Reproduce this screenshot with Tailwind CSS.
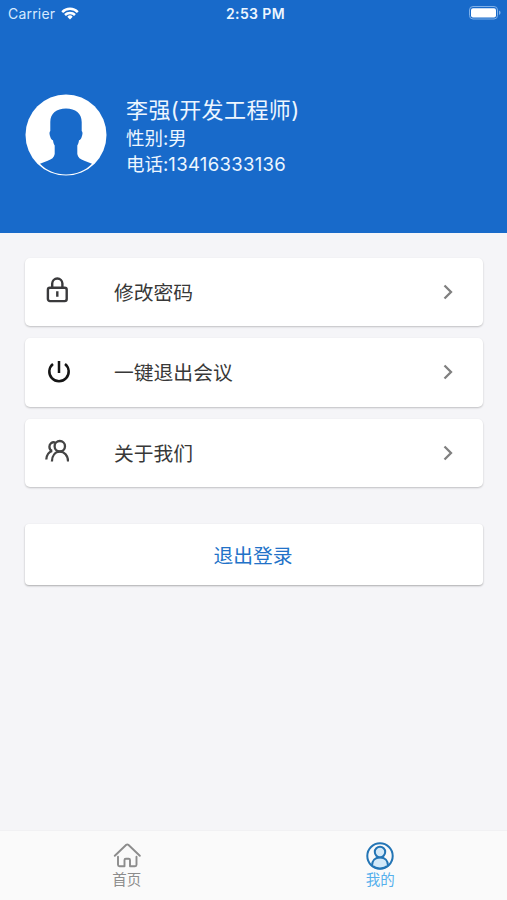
<!DOCTYPE html>
<html lang="zh-CN">
<head>
    <meta charset="UTF-8" />
    <meta name="viewport" content="width=device-width, initial-scale=1" />
    <title>我的</title>
    <script src="https://cdn.jsdelivr.net/npm/@tailwindcss/browser@4"></script>
</head>
<body class="bg-[#f5f5f8] h-screen flex flex-col overflow-hidden font-['Inter','Noto_Sans_CJK_SC',sans-serif]">
    <!-- Profile header -->
    <header class="bg-[#186aca] text-[#edf6ff] h-[233px] shrink-0">
        <div class="grid grid-cols-3 items-center h-7 pl-2 pr-1.5 text-[14px]">
            <div class="flex items-center gap-1.5 -mt-0.5 text-[#d5e9ff]">
                <span class="tracking-[0.2px]">Carrier</span>
                <svg class="w-[18px] h-[13px] text-white" viewBox="0 0 18 13" fill="none" stroke="currentColor" stroke-width="2.5">
                    <path d="M1.2 5.1a11 11 0 0 1 15.6 0" />
                    <path d="M4 8a7.1 7.1 0 0 1 10 0" />
                    <path d="M9 12.4 6.3 9.7a3.8 3.8 0 0 1 5.4 0z" fill="currentColor" stroke="none" />
                </svg>
            </div>
            <span class="text-center text-[14px] font-semibold tracking-[0.4px] -mt-0.5 pl-0.5">2:53 PM</span>
            <svg class="justify-self-end w-8 h-[14px] -mt-0.5" viewBox="0 0 32 14">
                <rect x="0.5" y="0.5" width="28" height="12.5" rx="3.5" fill="none" stroke="#7fb0e8" />
                <rect x="2" y="2.2" width="25" height="9.3" rx="2" fill="#fff" />
                <path d="M30 4.5q1.6.6 1.6 2.2T30 9z" fill="#7fb0e8" />
            </svg>
        </div>
        <div class="flex items-center pl-[25px] pt-[66px]">
            <svg class="w-[82px] h-[82px] -mt-0.5" viewBox="0 0 82 82">
                <circle cx="41" cy="41" r="40.5" fill="#fff" />
                <path d="M41 14.500c-9.500 0-15.700 5-15.700 13.500V37c-1.200.8-1 3.500.2 6.500.5 1.500 1.300 2.500 2.500 2.800.3 2 .6 3.700 1.700 5.200v8.500c-.5 3.500-3 5.300-7 6.700L15 69.800C22 77 31 80.500 41 80.500S60 77 67 69.800l-7.700-3.100c-4-1.400-6.500-3.200-7-6.700v-8.500c1.100-1.500 1.400-3.200 1.700-5.200 1.200-.3 2-1.300 2.500-2.800 1.200-3 1.400-5.700.2-6.500v-9c0-8.500-6.200-13.500-15.700-13.500z" fill="#186aca" />
            </svg>
            <div class="pl-[19px] pt-0.5">
                <h1 class="text-[22px] leading-[29px] tracking-[0.4px]">李强(开发工程师)</h1>
                <p class="text-[18.500px] leading-[26px]">性别:男</p>
                <p class="text-[18.500px] leading-[26px]">电话:<span class="tracking-[0.32px]">13416333136</span></p>
            </div>
        </div>
    </header>

    <!-- Menu -->
    <main class="flex-1 px-[25px] pt-[24.500px] text-[19.800px] text-[#383838]">
        <div class="flex flex-col gap-3 w-[458px]">
            <a href="#" class="flex items-center h-[68.500px] bg-white rounded-[5px] shadow-[0_1px_2px_rgba(0,0,0,0.22)] pl-5 pr-[29px]">
                <svg class="w-6 h-7 shrink-0 -mt-1" viewBox="0 0 24 28" fill="none" stroke="#3a3a3c" stroke-width="2.400">
                    <rect x="2.900" y="11.700" width="18.800" height="13.400" rx="2" />
                    <path d="M7.200 11.500V7.600a5.100 5.100 0 0 1 10.200 0v3.900M12.300 15.300v5.500" />
                </svg>
                <span class="flex-1 pl-[45px] pt-[4px]">修改密码</span>
                <svg class="w-3 h-4" viewBox="0 0 12 16" fill="none" stroke="#808080" stroke-width="2.300"><path d="m2.500 1.500 6.500 6.500-6.500 6.500" /></svg>
            </a>
            <a href="#" class="flex items-center h-[68.500px] bg-white rounded-[5px] shadow-[0_1px_2px_rgba(0,0,0,0.22)] pl-5 pr-[29px]">
                <svg class="w-6 h-6 shrink-0 ml-0.5 -mr-0.5" viewBox="0 0 24 24" fill="none" stroke="#151515" stroke-width="2.500">
                    <path d="M12 1v12M6 3.900a9.700 9.700 0 1 0 12 0" />
                </svg>
                <span class="flex-1 pl-[45px] pt-[4px]">一键退出会议</span>
                <svg class="w-3 h-4" viewBox="0 0 12 16" fill="none" stroke="#808080" stroke-width="2.300"><path d="m2.500 1.500 6.500 6.500-6.500 6.500" /></svg>
            </a>
            <a href="#" class="flex items-center h-[68.500px] bg-white rounded-[5px] shadow-[0_1px_2px_rgba(0,0,0,0.22)] pl-5 pr-[29px]">
                <svg class="w-6 h-6 shrink-0 -mt-1" viewBox="0 0 24 24" fill="none" stroke="#444" stroke-width="2.300">
                    <circle cx="14.800" cy="7.200" r="5.200" />
                    <path d="M6.900 22.500c.2-6 3.300-9.800 7.900-9.800s8.100 3.800 8.300 9.800" />
                    <path d="M10.300 3.500C7 2.500 4.400 4.600 4.400 7.700c0 2 1 3.500 2.700 4.300M7.200 12c-3.500 1-5.600 4-5.900 8.500" />
                </svg>
                <span class="flex-1 pl-[45px] pt-[4px]">关于我们</span>
                <svg class="w-3 h-4" viewBox="0 0 12 16" fill="none" stroke="#808080" stroke-width="2.300"><path d="m2.500 1.500 6.500 6.500-6.500 6.500" /></svg>
            </a>
        </div>
        <button type="button" class="mt-[37px] w-[458px] h-[61px] pt-1 pr-0.5 bg-white rounded-[4px] shadow-[0_1px_2px_rgba(0,0,0,0.3)] text-[#2272c8]">退出登录</button>
    </main>

    <!-- Tab bar -->
    <nav class="grid grid-cols-2 h-[70px] shrink-0 bg-[#fafafa] border-t border-[#f1f1f3] text-[14.500px] leading-[20px]">
        <a href="#" class="flex flex-col items-center pt-[11px] text-[#8c8c8c]">
            <svg class="w-7 h-7" viewBox="0 0 28 28" fill="none" stroke="currentColor" stroke-width="1.900" stroke-linecap="round" stroke-linejoin="round">
                <path d="M1.800 13.800 13.300 2.800q1-.8 2 0l11.500 11" />
                <path d="M5 14.800v8q0 1.500 1.500 1.500h5V18q0-1.300 1.300-1.300h2.900q1.300 0 1.300 1.300v6.300h5q1.500 0 1.500-1.500v-8" />
            </svg>
            <span>首页</span>
        </a>
        <a href="#" class="flex flex-col items-center pt-[11px] text-[#56b0ec]">
            <svg class="w-7 h-7" viewBox="0 0 28 28" fill="none" stroke="#2375b5" stroke-width="2">
                <circle cx="14" cy="14" r="12.700" />
                <path d="M6 23.600c0-5 3-8.100 8-8.100s8 3.100 8 8.100c-4.500 3.700-11.500 3.700-16 0z" fill="#d3e9f8" />
                <circle cx="14" cy="10" r="5.200" fill="#d3e9f8" />
            </svg>
            <span>我的</span>
        </a>
    </nav>
</body>
</html>
